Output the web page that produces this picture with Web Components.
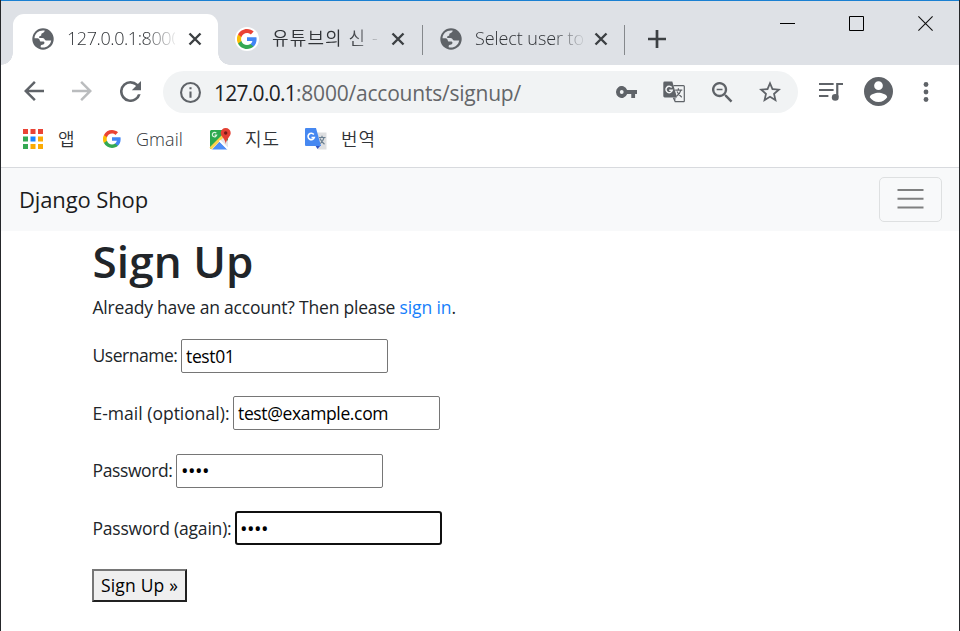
<!DOCTYPE html>
<html lang="ko"><head><meta charset="utf-8"><title>Django Shop</title>
<style>body{margin:0;overflow:hidden}</style></head>
<body><browser-window></browser-window>
<script>
const define=(name,html,init)=>customElements.define(name,class extends HTMLElement{
  connectedCallback(){
    if(this.shadowRoot)return;
    const root=this.attachShadow({mode:'open'});
    const t=document.createElement('template');
    t.innerHTML=typeof html==='function'?html(this):html;
    root.append(t.content.cloneNode(true));
    if(init)init(this,root);
  }
});

/* Single line label whose tracking adapts to the width given in "w". */
define('fit-text','<style>:host{display:inline-block;white-space:pre;flex:none}span{display:inline-block}</style><span><slot></slot></span>',(el,root)=>{
  const s=root.querySelector('span'),w=+el.getAttribute('w'),n=el.textContent.length;
  el.style.width=w+'px';
  s.style.letterSpacing=((w-s.getBoundingClientRect().width)/n)+'px';
});

const google='<path fill="#4285f4" d="M45.1 24.5c0-1.6-.1-3.1-.4-4.5H24v8.5h11.8c-.5 2.8-2.1 5.1-4.4 6.7v5.5h7.1c4.2-3.8 6.6-9.5 6.6-16.2z"/><path fill="#34a853" d="M24 46c5.9 0 10.9-2 14.5-5.3l-7.1-5.5c-2 1.3-4.5 2.1-7.4 2.1-5.7 0-10.6-3.9-12.3-9.1H4.3v5.7C8 41.1 15.4 46 24 46z"/><path fill="#fbbc04" d="M11.7 28.2a13.300 13.300 0 0 1 0-8.400v-5.700H4.300a22 22 0 0 0 0 19.800z"/><path fill="#ea4335" d="M24 10.700c3.200 0 6.100 1.100 8.400 3.300l6.300-6.300C34.900 4.200 29.900 2 24 2 15.400 2 8 6.900 4.300 14.100l7.400 5.700C13.400 14.600 18.300 10.700 24 10.700z"/>';
const icons={
 globe:['0 0 22 22','<circle cx="11" cy="11" r="10.700" fill="#5f6368"/><path fill="var(--gap,#fff)" d="M2.500 10.200C2.700 5.500 6.500 2.500 11 2.500c.9 0 1.500.1 1.800.3-.5 1-.9 1.900-1.900 2.200-1 .3-1.600.7-1.600 1.700 0 1-.8 1.300-1.600 1.500-.8.200-.9 1.200-.2 1.700h3c1.300 0 1.900.9 2.200 1.700.4.900 1 .9 2 .9h4.500c-.8 4.300-4 7-8.300 7-1 0-1.700-.1-2.200-.3-.2-1.300.1-2.400 1.500-2.500 1.300-.1 2-.6 2.200-1.600.2-1-.3-1.500-1.400-1.500H9.300c-1.200 0-1.400-.9-1.700-1.700-.3-.9-.9-1.500-2-1.600z"/>'],
 google:['2 2 44 44',google],
 close:['0 0 14 14','<path d="m1.500 1.500 11 11m0-11-11 11" stroke="#3c4043" stroke-width="2.400" fill="none"/>'],
 plus:['0 0 18 18','<path d="M9 0v18M0 9h18" stroke="#3c4043" stroke-width="2.700" fill="none"/>'],
 back:['4 4 16 16','<path fill="#5f6368" d="M20 11H7.800l5.600-5.600L12 4l-8 8 8 8 1.400-1.400L7.800 13H20z"/>'],
 forward:['4 4 16 16','<path fill="#babcbe" d="m12 4-1.400 1.400 5.600 5.600H4v2h12.200l-5.600 5.600L12 20l8-8z"/>'],
 reload:['4 4 16 16','<path fill="#5f6368" d="M17.650 6.350A7.960 7.960 0 0 0 12 4a8 8 0 1 0 7.730 10h-2.080A6 6 0 1 1 12 6c1.660 0 3.140.690 4.220 1.780L13 11h7V4z"/>'],
 info:['2 2 20 20','<path fill="#5f6368" d="M11 7h2v2h-2zm0 4h2v6h-2zm1-9a10 10 0 1 0 0 20 10 10 0 0 0 0-20zm0 18a8 8 0 1 1 0-16 8 8 0 0 1 0 16z"/>'],
 key:['1 6 22 12','<path fill="#5f6368" d="M12.650 10a6 6 0 1 0 0 4H17v4h4v-4h2v-4zM7 14a2 2 0 1 1 0-4 2 2 0 0 1 0 4z"/>'],
 translate:['0 0 22 22','<path fill="none" stroke="#5f6368" stroke-width="1.200" d="M10.500 4.600h10a.8.8 0 0 1 .8.8v14.500a.8.8 0 0 1-.8.800h-8.300l-1.800-4"/><path fill="#5f6368" d="M1.700.5h7.600l4.700 16H1.700a1.400 1.400 0 0 1-1.400-1.400V1.900A1.400 1.400 0 0 1 1.700.5z"/><path fill="none" stroke="#f1f3f4" stroke-width="1.500" d="M8.700 6.500a3.200 3.200 0 1 0 .6 2.700H6.200"/><path fill="none" stroke="#5f6368" stroke-width="1.200" d="M12.200 9.200h7.100M15.400 7.300v1.900M17.800 9.300c-.7 2.800-2.300 4.600-4.300 6M14 10.500c1.300 2.400 2.700 4.200 4.800 5.800M12 16.500l-.3 3"/>'],
 zoom:['3 3 18 18','<path fill="#5f6368" d="M15.500 14h-.790l-.280-.270a6.500 6.500 0 1 0-.7.700l.270.280v.790l5 4.990L20.490 19zM9.500 14a4.500 4.500 0 1 1 0-9 4.500 4.500 0 0 1 0 9zM7 8.800h5v1.200H7z"/>'],
 star:['2 2 20 20','<path fill="#5f6368" d="m22 9.240-7.190-.620L12 2 9.190 8.630 2 9.240l5.460 4.730L5.820 21 12 17.270 18.180 21l-1.630-7.030zM12 15.400l-3.760 2.270 1-4.280-3.320-2.880 4.380-.380L12 6.100l1.710 4.040 4.380.380-3.320 2.880 1 4.280z"/>'],
 queue:['0 0 23 19','<path stroke="#5f6368" stroke-width="2.100" fill="none" d="M0 2h14M0 8h14M0 14h9M17.500 15V2h5.500"/><circle cx="15.600" cy="15.400" r="3.300" fill="#5f6368"/>'],
 user:['2 2 20 20','<path fill="#5f6368" d="M12 2a10 10 0 1 0 0 20 10 10 0 0 0 0-20zm0 3a3 3 0 1 1 0 6 3 3 0 0 1 0-6zm0 14.200a7.200 7.200 0 0 1-6-3.220c.030-1.990 4-3.080 6-3.080s5.970 1.090 6 3.080a7.200 7.200 0 0 1-6 3.220z"/>'],
 dots:['0 0 6 20','<g fill="#5f6368"><circle cx="3" cy="2.500" r="2.400"/><circle cx="3" cy="10" r="2.400"/><circle cx="3" cy="17.500" r="2.400"/></g>'],
 min:['0 0 15 15','<path d="M0 7.500h15" stroke="#000"/>'],
 max:['0 0 15 15','<path d="M.5.5h14v14H.5z" stroke="#000" fill="none"/>'],
 x:['0 0 15 15','<path d="m.4.400 14.200 14.200m0-14.200L.4 14.600" stroke="#111" stroke-width="1.100"/>'],
 apps:['0 0 20 20','<path fill="#ea4335" d="M0 0h5v5H0zM7.500 0h5v5h-5zM15 0h5v5h-5z"/><path fill="#34a853" d="M0 7.500h5v5H0zM0 15h5v5H0z"/><path fill="#1a85ff" d="M7.500 7.500h5v5h-5z"/><path fill="#fbab04" d="M15 7.500h5v5h-5zM15 15h5v5h-5zM7.500 15h5v5h-5z"/>'],
 maps:['0 0 22 22','<path fill="#2da94f" d="M2 2h17v12L11 12 1 21V3z"/><path fill="#e4e7e9" d="m10.500 12 4-4 4.500 5v8z"/><path fill="#4d8df6" d="m3 21.500 7.500-8 8 8z"/><path d="m1.500 20.500 13-13" stroke="#fdd34d" stroke-width="2.800"/><path d="m10.500 12.500 8.500 8.500" stroke="#fff" stroke-width="1.800"/><path fill="none" stroke="#d9f2df" stroke-width="1.200" d="M7.300 5.200a2.200 2.200 0 1 0 .4 2H5.600"/><path fill="#e34133" d="M16.700 0a5 5 0 0 1 5 5c0 3.500-4.200 5.500-4.900 11C16.200 10.500 11.700 8.500 11.700 5a5 5 0 0 1 5-5z"/><circle cx="16.700" cy="5" r="1.700" fill="#751c17"/>'],
 translateColor:['0 0 22 22','<path fill="#dedfe1" d="M9 4.500h12.500v17H13z"/><path fill="#3155c4" d="M10 17h6l-3.500 4z"/><path fill="#4688f1" d="M1 0h10l5 18H1a1 1 0 0 1-1-1V1a1 1 0 0 1 1-1z"/><path fill="none" stroke="#fff" stroke-width="1.600" d="M8.800 6.500A3.200 3.200 0 1 0 9.300 9.500H6.500"/><path fill="none" stroke="#6a7f91" stroke-width="1.200" d="M14 9.500h6.500M17 7.800v1.700M19 9.600c-.7 2.800-2 4.500-3.800 6M15 10.500c1 2.400 2.500 4.200 4.500 5.800"/>'],
 menu:['0 0 27 21','<path d="M.5 2h26M.5 10.700h26M.5 19.500h26" stroke="#7f8080" stroke-width="2.100"/>']
};
define('ui-icon',el=>{const [vb,p]=icons[el.getAttribute('name')];
 return `<style>:host{display:block;flex:none;width:${el.getAttribute('w')}px;height:${el.getAttribute('h')||el.getAttribute('w')}px}svg{display:block;width:100%;height:100%}</style><svg viewBox="${vb}" preserveAspectRatio="none">${p}</svg>`});

define('browser-tab',`<style>
:host{display:flex;align-items:center;height:50px;box-sizing:border-box;font-size:18px;color:#303337;flex:none;font-weight:350;--gap:#dee1e6}
:host([active]){height:51px;padding-bottom:1px;background:#fff;border-radius:11px 11px 0 0;--gap:#fff;position:relative}
:host([active])::before,:host([active])::after{content:"";position:absolute;bottom:0;width:12px;height:12px;background:radial-gradient(circle at 0 0,transparent 11.500px,#fff 12px)}
:host([active])::before{left:-12px}
:host([active])::after{right:-12px;background:radial-gradient(circle at 100% 0,transparent 11.500px,#fff 12px)}
.t{overflow:hidden;width:108px;height:30px;line-height:29px;flex:none;-webkit-mask:linear-gradient(90deg,#000 72%,transparent 104%)}
</style><slot name="icon"></slot><div class="t"><slot></slot></div><slot name="close"></slot>`);

define('tab-strip',`<style>
:host{display:flex;height:65px;padding:13px 27px 0 12px;box-sizing:border-box;background:#dee1e6;border-top:1px solid #1a80d2}
browser-tab:nth-of-type(1){width:205px;padding-left:19px;gap:13px}
browser-tab:nth-of-type(2){width:204px;padding-left:17px;gap:13px}
browser-tab:nth-of-type(3){width:203px;padding-left:17px;gap:13px}
.g{background:#fff;border-radius:50%;padding:2px}
.sep{width:1px;height:30px;background:#85888c;margin:11px 0 0;flex:none}
.add{margin:16px 0 0 23px}
.win{display:flex;gap:54px;margin:1px -1px 0 auto}
</style>
<browser-tab active><ui-icon slot="icon" name="globe" w="22"></ui-icon><fit-text w="114">127.0.0.1:8000</fit-text><ui-icon slot="close" name="close" w="14"></ui-icon></browser-tab>
<browser-tab><ui-icon slot="icon" class="g" name="google" w="20"></ui-icon><fit-text w="107">유튜브의 신 -</fit-text><ui-icon slot="close" name="close" w="14" style="margin-left:-2px"></ui-icon></browser-tab>
<div class="sep"></div>
<browser-tab><ui-icon slot="icon" name="globe" w="22"></ui-icon><fit-text w="109">Select user to</fit-text><ui-icon slot="close" name="close" w="14" style="margin-left:-2px"></ui-icon></browser-tab>
<div class="sep" style="margin-left:-2px"></div><ui-icon class="add" name="plus" w="18"></ui-icon>
<div class="win" style="margin-right:0;padding-top:1px"><ui-icon name="min" w="15"></ui-icon><ui-icon name="max" w="15"></ui-icon><ui-icon name="x" w="15" style="margin-right:-1px"></ui-icon></div>`);

define('tool-bar',`<style>
:host{display:flex;height:53px;align-items:center;padding-left:23px;background:#fff;box-sizing:border-box}
.nav{display:flex;gap:28px;width:139px;flex:none}
.box{display:flex;align-items:center;width:635px;height:42px;border-radius:21px;background:#f1f3f4;box-sizing:border-box;padding:0 17px 0 17px;margin-top:1px;flex:none}
.url{margin-left:13px;font-size:21px;line-height:30px;color:#202124;display:flex;padding-top:1px}
.url fit-text+fit-text{color:#646669}
.r{display:flex;align-items:center;gap:26.500px;margin-left:auto}
.m{display:flex;align-items:center;margin-left:21px}
</style>
<div class="nav"><ui-icon name="back" w="20"></ui-icon><ui-icon name="forward" w="20"></ui-icon><ui-icon name="reload" w="21"></ui-icon></div>
<div class="box"><ui-icon name="info" w="21"></ui-icon><div class="url"><fit-text w="82">127.0.0.1</fit-text><fit-text w="225">:8000/accounts/signup/</fit-text></div>
<div class="r"><ui-icon name="key" w="21" h="12"></ui-icon><ui-icon name="translate" w="22"></ui-icon><ui-icon name="zoom" w="21"></ui-icon><ui-icon name="star" w="22"></ui-icon></div></div>
<div class="m"><ui-icon name="queue" w="24" h="19"></ui-icon><ui-icon name="user" w="29" style="margin-left:21px"></ui-icon><ui-icon name="dots" w="6" h="20" style="margin-left:30px"></ui-icon></div>`);

define('bookmark-bar',`<style>
:host{display:flex;align-items:center;height:50px;box-sizing:border-box;padding:0 0 7px 22px;border-bottom:1px solid #d8dade;background:#fff;font-size:18px;line-height:28px;color:#303337;font-weight:350}
ui-icon{margin-right:14px}fit-text{margin-right:27px}
</style><ui-icon name="apps" w="20" style="margin-left:0"></ui-icon><fit-text w="18" style="margin-left:1px;margin-right:27px">앱</fit-text>
<ui-icon name="google" w="18" style="margin-right:15px"></ui-icon><fit-text w="47" style="margin-right:26px">Gmail</fit-text>
<ui-icon name="maps" w="22"></ui-icon><fit-text w="35" style="margin-right:25px">지도</fit-text>
<ui-icon name="translateColor" w="22"></ui-icon><fit-text w="35">번역</fit-text>`);

define('site-nav',`<style>
:host{display:flex;align-items:center;justify-content:space-between;height:63px;background:#f8f9fa;padding:0 17px 0 18px;color:#1b1c1d;font-size:22px;line-height:34px}
fit-text{margin-bottom:2px}
button{width:63px;height:45px;border:1px solid #dee0e1;border-radius:5px;background:none;padding:0 0 2px;display:flex;align-items:center;justify-content:center}
</style><fit-text w="129">Django Shop</fit-text><button aria-label="Menu"><ui-icon name="menu" w="27" h="21"></ui-icon></button>`);

define('form-row',el=>`<style>
:host{display:flex;align-items:center;height:34px;margin-bottom:23.500px;gap:3.500px}
input{width:207px;height:34px;box-sizing:border-box;border:1px solid #767676;border-radius:2px;padding:0 4px;background:#fff;color:#000;font:17.500px "Open Sans","Noto Sans",sans-serif;letter-spacing:-.36px;outline:none;flex:none}
:host([active]) input{border:2px solid #101010;border-radius:3px;padding:0 3px}
input[type=password]{font-size:20px;letter-spacing:-.500px}
</style><fit-text w="${el.getAttribute('lw')}">${el.getAttribute('label')}</fit-text><input type="${el.getAttribute('type')}" value="${el.getAttribute('value')}">`);

define('signup-page',`<style>
:host{display:block;padding:3px 0 0 91.500px;color:#212529;font-size:17.500px;line-height:27px;background:#fff}
h1{font-size:44px;font-weight:600;line-height:54px;margin:0 0 6px}
p{margin:0 0 17.800px;height:27px;display:flex}
a{color:#1680fb;text-decoration:none}
button{display:block;width:95px;height:33px;margin-left:-.5px;border:2px solid;border-color:#767676 #212121 #212121 #767676;border-radius:0;background:#efefef;font:17.500px "Open Sans","Noto Sans",sans-serif;color:#000;padding:0 0 1px}
</style><h1><fit-text w="161">Sign Up</fit-text></h1>
<p><fit-text w="307">Already have an account? Then please </fit-text><a href="#"><fit-text w="52">sign in</fit-text></a><span>.</span></p>
<form-row label="Username:" lw="85" type="text" value="test01"></form-row>
<form-row label="E-mail (optional):" lw="137" type="text" value="test@example.com"></form-row>
<form-row label="Password:" lw="80" type="password" value="1234"></form-row>
<form-row active label="Password (again):" lw="139" type="password" value="1234"></form-row>
<button><fit-text w="77">Sign Up »</fit-text></button>`);

define('browser-window',`<style>
:host{display:block;width:960px;height:631px;box-sizing:border-box;border:solid #25272a;border-width:0 1px;background:#fff;overflow:hidden;font-family:"Open Sans","Noto Sans CJK KR",sans-serif}
</style><tab-strip></tab-strip><tool-bar></tool-bar><bookmark-bar></bookmark-bar><site-nav></site-nav><signup-page></signup-page>`);
</script></body></html>
